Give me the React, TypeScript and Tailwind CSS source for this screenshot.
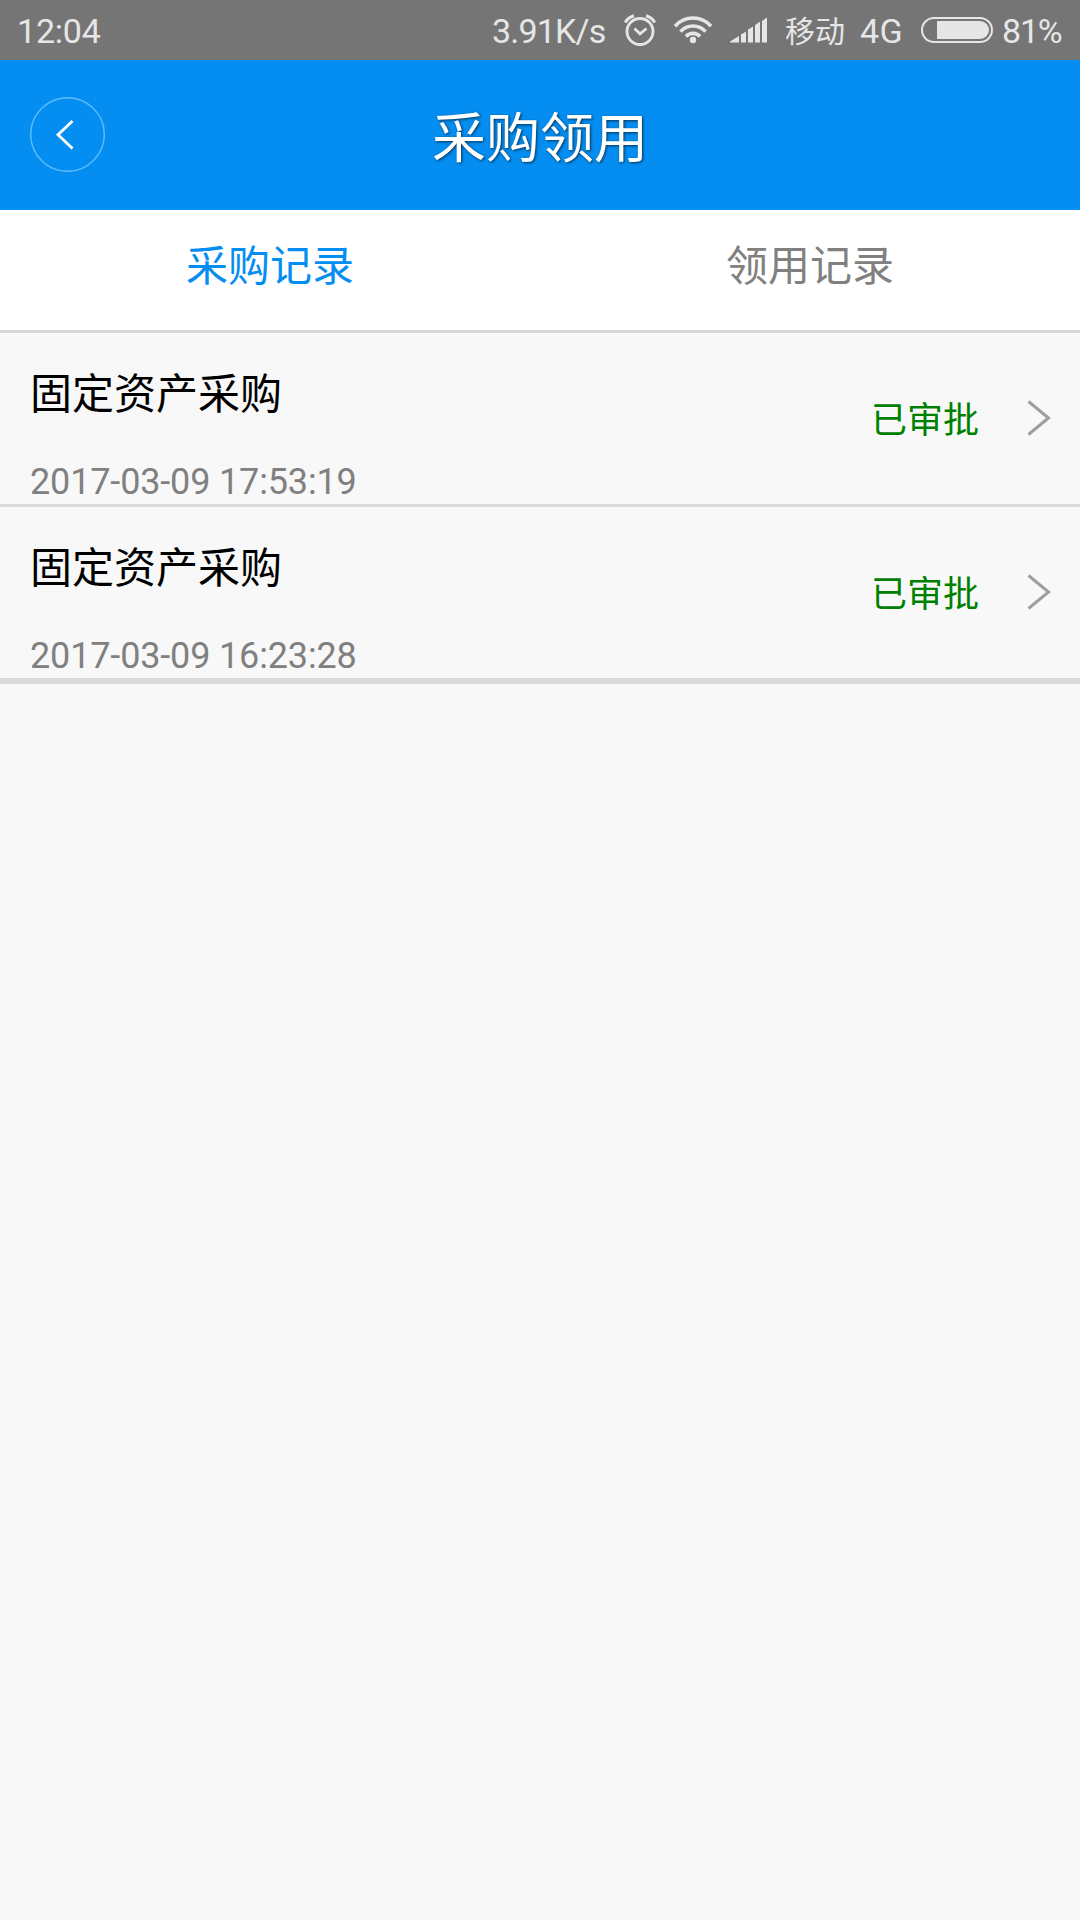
const records = [
  { title: '固定资产采购', time: '2017-03-09 17:53:19', status: '已审批' },
  { title: '固定资产采购', time: '2017-03-09 16:23:28', status: '已审批' },
];

function AlarmIcon() {
  return (
    <svg className="ml-[17px] h-[34px] w-[34px] shrink-0" viewBox="623 12 34 34" fill="none" stroke="#e6e6e6">
      <circle cx="640" cy="30.5" r="13" strokeWidth="2.8" />
      <path d="M634.5 27.5l5.5 5.3 6.5-5.3" strokeWidth="2.8" />
      <path d="M625.2 21.5Q628 16.5 634 14.8M654.8 21.5Q652 16.5 646 14.8" strokeWidth="3" />
    </svg>
  );
}

function WifiIcon() {
  return (
    <svg className="ml-[16px] h-[30px] w-[40px] shrink-0" viewBox="673 15 40 30" fill="none" stroke="#e6e6e6" strokeWidth="3.6">
      <path d="M675 26.2A24 24 0 0 1 711 26.2" />
      <path d="M680.5 31.7A16.5 16.5 0 0 1 705.5 31.7" />
      <path d="M686 36.5A9.5 9.5 0 0 1 700 36.5" />
      <circle cx="693" cy="40" r="3.2" fill="#e6e6e6" stroke="none" />
    </svg>
  );
}

function SignalIcon() {
  return (
    <svg className="ml-[17px] h-[26px] w-[38px] shrink-0" viewBox="730 17.5 38 26" fill="#e6e6e6">
      <path d="M730 43v-1l9-5.5v6.5zM741 43v-8l5-3v11zM748 43v-13l5-3v16zM755 43v-17.5l5-3.2v20.7zM762 43v-21.5l5-3.5v25z" />
    </svg>
  );
}

function StatusBar() {
  return (
    <div className="flex h-[60px] items-center bg-[#757575] text-[#e6e6e6] whitespace-nowrap">
      <div className="ml-[17px] w-[475px] pt-[3px] font-[Roboto] text-[34px] tracking-[-0.2px]">12:04</div>
      <div className="w-[114px] pt-[3px] font-[Roboto] text-[34px] tracking-[-0.8px]">3.91K/s</div>
      <AlarmIcon />
      <WifiIcon />
      <SignalIcon />
      <div className="ml-[17px] w-[75px] pt-[2px] text-[30px]">移动</div>
      <div className="w-[61px] pt-[3px] font-[Roboto] text-[34px] tracking-[0.5px]">4G</div>
      <div className="flex h-[26px] w-[72px] justify-end rounded-full border-2 border-[#e6e6e6] p-[2px]">
        <div className="h-[18px] w-[52px] rounded-r-full bg-[#e6e6e6]" />
      </div>
      <div className="ml-[9px] pt-[3px] font-[Roboto] text-[34px] tracking-[-1.2px]">81%</div>
    </div>
  );
}

export default function App() {
  return (
    <div className="min-h-[1920px] w-[1080px] overflow-hidden bg-[#f8f8f8] font-['Roboto','Noto_Sans_CJK_SC',sans-serif]">
      <StatusBar />
      <header className="grid h-[150px] grid-cols-[1fr_auto_1fr] items-center bg-[#058ef2] px-[30px]">
        <button className="mb-[2px] h-[75px] w-[75px]" aria-label="返回">
          <svg viewBox="0 0 75 75" fill="none" className="h-full w-full">
            <circle cx="37.5" cy="37.5" r="36.8" stroke="#58bbfb" strokeWidth="1.5" />
            <path d="M42.5 24L28 37.7L42.5 51.5" stroke="white" strokeWidth="2.8" />
          </svg>
        </button>
        <h1 className="pt-[9px] text-[54px] leading-[80px] text-white [text-shadow:1px_1px_3px_rgba(0,0,0,0.65)]">采购领用</h1>
      </header>
      <nav className="grid h-[123px] grid-cols-2 border-b-[3px] border-[#d9d9d9] bg-white text-center text-[42px] leading-[60px]">
        <div className="pt-[27px] text-[#058ef2]">采购记录</div>
        <div className="pt-[27px] text-[#808080]">领用记录</div>
      </nav>
      <main className="border-b-[3px] border-[#d9d9d9]">
        {records.map((r) => (
          <div key={r.time} className="flex h-[174px] items-center border-b-[3px] border-[#d9d9d9] pr-[29px] pl-[30px]">
            <div className="flex h-full flex-1 flex-col justify-between pt-[32px]">
              <div className="text-[42px] leading-[60px] text-black">{r.title}</div>
              <div className="text-[36px] leading-[44px] tracking-[-0.15px] text-[#808080]">{r.time}</div>
            </div>
            <div className="pt-[4px] text-[36px] leading-[50px] text-[#008000]">{r.status}</div>
            <svg viewBox="0 0 24 36" fill="none" className="mb-[2px] ml-[48px] h-[36px] w-[24px]">
              <path d="M1.5 1.5L21.5 18L1.5 34.5" stroke="#9e9e9e" strokeWidth="3" />
            </svg>
          </div>
        ))}
      </main>
    </div>
  );
}
